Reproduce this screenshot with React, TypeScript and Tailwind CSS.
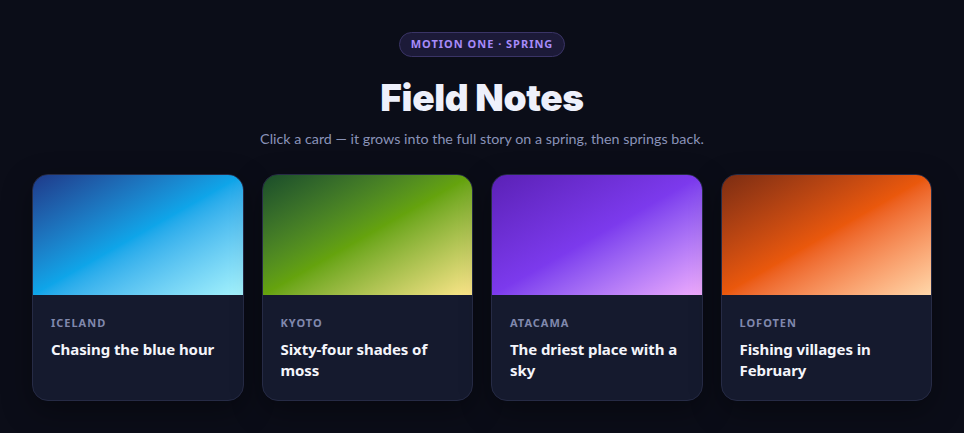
import React from "react";

const cards = [
  { place: "ICELAND", title: "Chasing the blue hour", grad: "bg-gradient-to-br from-[#1e3a8a] via-[#0ea5e9] to-[#a5f3fc]" },
  { place: "KYOTO", title: "Sixty-four shades of moss", grad: "bg-gradient-to-br from-[#1a4d2a] via-[#65a30d] to-[#fde68a]" },
  { place: "ATACAMA", title: "The driest place with a sky", grad: "bg-gradient-to-br from-[#5b21b6] via-[#7c3aed] to-[#f0abfc]" },
  { place: "LOFOTEN", title: "Fishing villages in February", grad: "bg-gradient-to-br from-[#7c2d12] via-[#ea580c] to-[#fed7aa]" },
];

export default function App() {
  return (
    <div
      className="min-h-[433px] w-full bg-[#0b0d18] flex flex-col items-center pt-8"
      style={{ fontFamily: "'Noto Sans', 'Open Sans', sans-serif" }}
    >
      <div className="h-[25px] px-[11px] rounded-full border border-[#3a3466] bg-[#1c1a38] flex items-center text-[11px] font-bold tracking-[0.09em] text-[#a78bfa]">
        MOTION ONE · SPRING
      </div>
      <h1
        className="mt-[19px] text-[37px] leading-[44px] font-black text-[#eef0fb] tracking-[-0.01em]"
        style={{ fontFamily: "Inter, 'Noto Sans', sans-serif" }}
      >
        Field Notes
      </h1>
      <p
        className="mt-[9px] text-[14.3px] leading-[20px] text-[#8a93b8]"
        style={{ fontFamily: "Lato, 'Noto Sans', sans-serif" }}
      >
        Click a card — it grows into the full story on a spring, then springs back.
      </p>
      <div className="mt-[25px] w-[900px] grid grid-cols-4 gap-[18px]">
        {cards.map((c) => (
          <div
            key={c.place}
            className="h-[227px] rounded-[16px] overflow-hidden border border-[#262b45] bg-[#151a2e] flex flex-col shadow-[0_10px_30px_rgba(0,0,0,0.35)]"
          >
            <div className={`h-[120px] shrink-0 ${c.grad}`} />
            <div className="px-[18px] pt-[20px]">
              <div className="text-[11px] leading-[16px] font-bold tracking-[0.09em] text-[#8088ad]">{c.place}</div>
              <div className="mt-[8px] text-[15px] leading-[21px] font-bold text-[#f4f5fb] tracking-[-0.005em]">{c.title}</div>
            </div>
          </div>
        ))}
      </div>
    </div>
  );
}
